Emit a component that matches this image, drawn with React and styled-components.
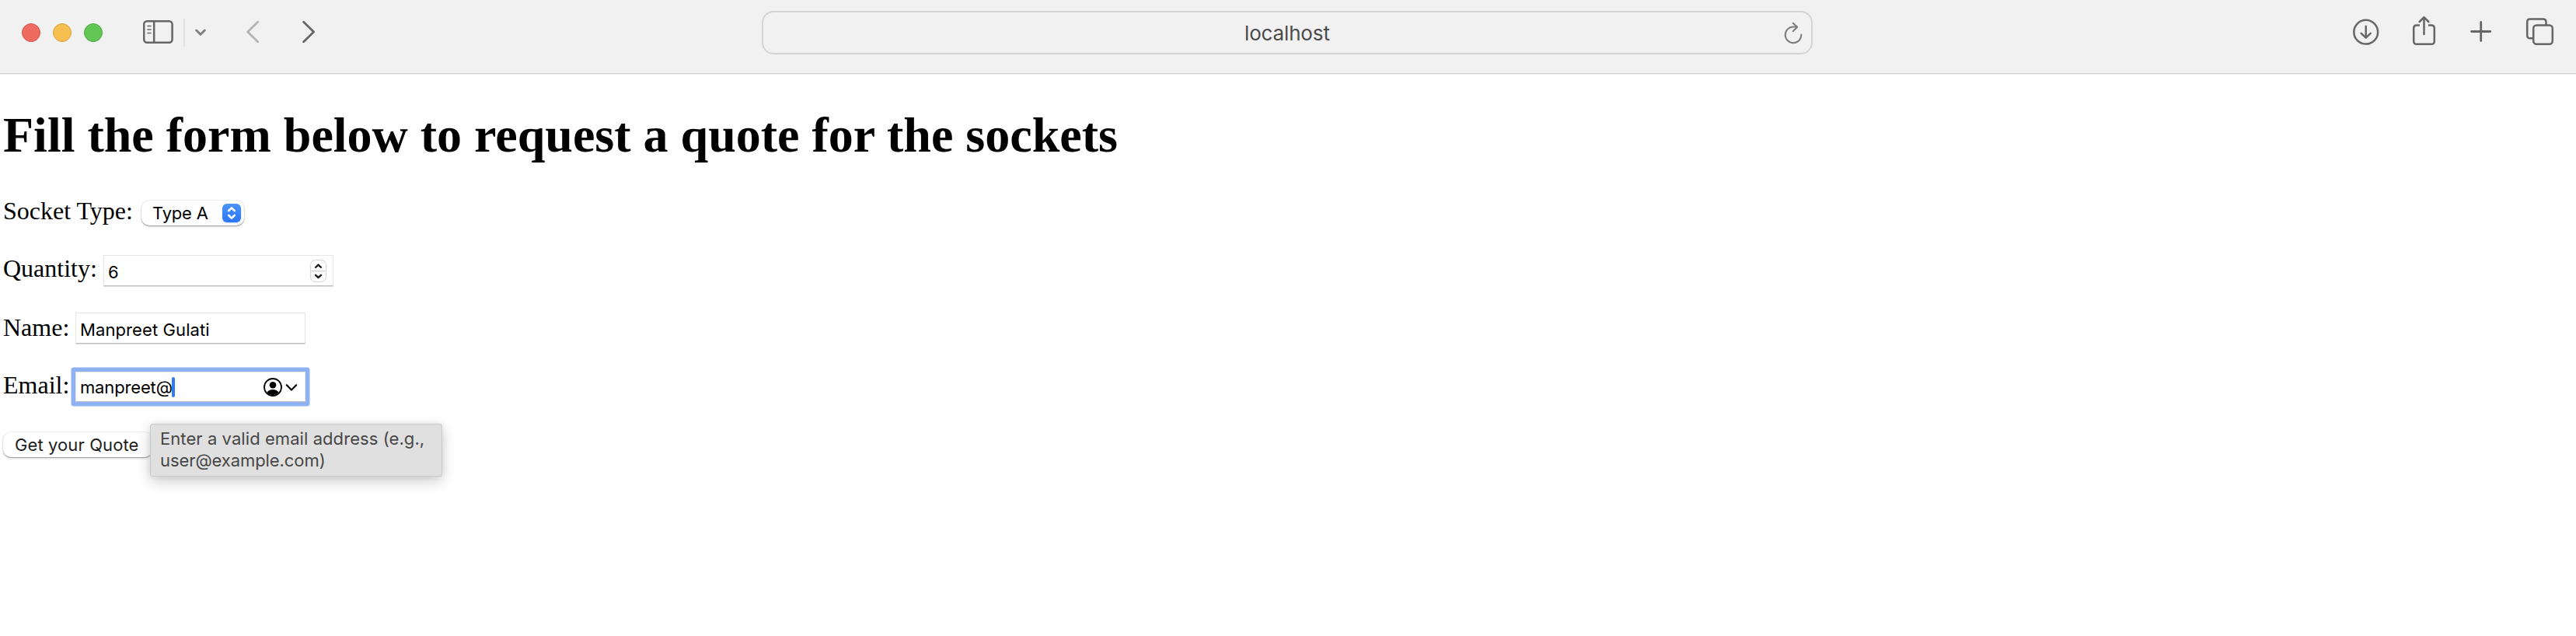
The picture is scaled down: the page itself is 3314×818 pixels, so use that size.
import React from "react";
import styled, { createGlobalStyle } from "styled-components";

const GlobalStyle = createGlobalStyle`
  *, *::before, *::after { box-sizing: border-box; }
  html, body { margin: 0; background: #fff; }
  body { overflow: hidden; }
`;

const ui = `Inter, "Liberation Sans", sans-serif`;

const Page = styled.div`
  width: 3314px;
  height: 818px;
  background: #fff;
  color: #000;
`;

const Toolbar = styled.header`
  display: grid;
  grid-template-columns: 980px 1352px 1fr;
  height: 96px;
  background: #f1f1f1;
  border-bottom: 1px solid #ececec;
  box-shadow: inset 0 -1px 0 #d5d5d5;
`;

const ToolGroup = styled.div`
  display: flex;
  align-items: flex-start;
  justify-content: ${(p) => (p.$end ? "flex-end" : "flex-start")};
  padding: ${(p) => (p.$end ? "18px 26px 0 0" : "18px 0 0 28px")};
`;

const Lights = styled.div`
  display: flex;
  gap: 16px;
  padding-top: 12px;
  margin-right: 48px;
`;

const Light = styled.span`
  width: 24px;
  height: 24px;
  border-radius: 50%;
  background: ${(p) => p.$fill};
  border: 1px solid ${(p) => p.$edge};
`;

const Divider = styled.span`
  width: 2px;
  height: 36px;
  margin: 6px 11px 0 12px;
  background: #e2e2e2;
`;

const Icon = styled.svg`
  display: block;
  flex: none;
  margin-left: ${(p) => p.$gap || 0}px;
  fill: none;
  stroke: ${(p) => p.$color || "#666"};
  stroke-width: ${(p) => p.$weight || 2.5};
  stroke-linecap: round;
  stroke-linejoin: round;
`;

const AddressBar = styled.div`
  display: flex;
  justify-content: space-between;
  height: 56px;
  margin-top: 14px;
  padding: 0 10px 0 619px;
  border: 2px solid #d4d4d4;
  border-radius: 15px;
`;

const Address = styled.span`
  font: 400 26px/53px ${ui};
  letter-spacing: -0.15px;
  color: #4b4b4b;
`;

const Content = styled.main`
  padding: 42px 0 0 4px;
`;

const Title = styled.h1`
  margin: 0 0 43px;
  font: 700 64px/72px "Liberation Serif", serif;
  white-space: nowrap;
`;

const Row = styled.div`
  display: flex;
  align-items: flex-start;
  height: ${(p) => p.$height}px;
`;

const Label = styled.label`
  flex: none;
  width: ${(p) => p.$width}px;
  font: 400 32px/36px "Liberation Serif", serif;
  white-space: nowrap;
`;

const Select = styled.div`
  display: flex;
  align-items: center;
  justify-content: space-between;
  width: 132px;
  height: 32px;
  margin-top: 5px;
  padding: 0 4px 0 14px;
  border-radius: 10px;
  background: #fff;
  box-shadow: 0 0 0 1px rgba(0, 0, 0, 0.06), 0 1px 1px rgba(0, 0, 0, 0.26), 0 2px 3px rgba(0, 0, 0, 0.12);
`;

const Arrows = styled.span`
  width: 24px;
  height: 24px;
  border-radius: 6px;
  background: linear-gradient(#4a94fb, #2d75f6);
  box-shadow: 0 1px 2px rgba(45, 117, 246, 0.3);
`;

const Field = styled.div`
  display: flex;
  align-items: center;
  justify-content: space-between;
  width: 296px;
  height: ${(p) => p.$height || 40}px;
  margin-top: ${(p) => p.$top}px;
  padding: 0 9px 0 5px;
  border: 1px solid #e6e6e6;
  border-bottom: 1px solid #bdbdbd;
  background: #fff;
  box-shadow: ${(p) =>
    p.$focused ? "0 0 0 5.5px #8fb2f5" : "0 1px 0 rgba(0, 0, 0, 0.12)"};
  border-radius: ${(p) => (p.$focused ? 1 : 0)}px;
`;

const Value = styled.span`
  display: flex;
  align-items: center;
  font: 400 22px/26px ${ui};
  letter-spacing: ${(p) => p.$track || 0}px;
  padding-top: ${(p) => p.$drop || 0}px;
  white-space: nowrap;
`;

const Caret = styled.span`
  width: 4px;
  height: 26px;
  margin-left: -1px;
  border-radius: 2px;
  background: #2f7bf6;
`;

const Stepper = styled.span`
  display: flex;
  flex-direction: column;
  width: 19px;
  height: 27px;
  border-radius: 6px;
  background: #fff;
  box-shadow: 0 0 0 1px rgba(0, 0, 0, 0.1), 0 0 2px rgba(0, 0, 0, 0.22);
`;

const FieldIcons = styled.span`
  display: flex;
  align-items: center;
  gap: 3px;
`;

const SubmitRow = styled.div`
  display: flex;
  align-items: flex-start;
  position: relative;
`;

const Submit = styled.button`
  width: 192px;
  height: 32px;
  margin: 3px 0 0;
  padding: 0 0 0 15px;
  border: 0;
  border-radius: 10px;
  background: #fff;
  color: #1e1e1e;
  font: 400 22px/32px ${ui};
  letter-spacing: 0.1px;
  text-align: left;
  white-space: nowrap;
  box-shadow: 0 0 0 1px rgba(0, 0, 0, 0.06), 0 1px 1px rgba(0, 0, 0, 0.26), 0 2px 3px rgba(0, 0, 0, 0.12);
`;

const Tooltip = styled.div`
  position: absolute;
  left: 189px;
  top: -6px;
  width: 376px;
  height: 68px;
  top: -8px;
  padding: 4px 0 0 12px;
  border: 1px solid #c9c9c9;
  border-radius: 3px;
  background: #e0e0e0;
  color: #474747;
  font: 400 22px/28px ${ui};
  white-space: nowrap;
  box-shadow: 0 6px 18px rgba(0, 0, 0, 0.2), 0 0 8px rgba(0, 0, 0, 0.06);
`;

const TooltipLine = styled.div`
  letter-spacing: ${(p) => p.$track}px;
`;

export default function App() {
  return (
    <Page>
      <GlobalStyle />
      <Toolbar>
        <ToolGroup>
          <Lights>
            <Light $fill="#ed6b5f" $edge="#d9554a" />
            <Light $fill="#f5bf4f" $edge="#d9a13c" />
            <Light $fill="#62c655" $edge="#4fa73f" />
          </Lights>
          <Icon $gap={4} width="40" height="46" viewBox="184 18 40 46">
            <rect x="185.2" y="27.2" width="36.4" height="27.6" rx="4" />
            <path d="M198.2 27.5V54.5" />
            <path d="M190 33.5h4M190 38h4M190 42.5h4" strokeWidth="1.6" />
          </Icon>
          <Divider />
          <Icon width="20" height="46" viewBox="249 18 20 46" $color="#808085" $weight={3}>
            <path d="M252.7 39L258 44.2L263.3 39" />
          </Icon>
          <Icon $gap={46} width="20" height="46" viewBox="315 18 20 46" $color="#b3b3b3" $weight={2.8}>
            <path d="M331.7 28.3L318.7 41L331.7 53.7" />
          </Icon>
          <Icon $gap={52} width="20" height="46" viewBox="387 18 20 46" $weight={2.8}>
            <path d="M390.6 28.3L403.6 41L390.6 53.7" />
          </Icon>
        </ToolGroup>
        <AddressBar>
          <Address>localhost</Address>
          <Icon width="28" height="52" viewBox="2292 16 28 52" $color="#7c7c7c" $weight={2}>
            <path d="M2311.5 34.6H2307A10.3 10.3 0 1 0 2317.3 44.5" />
            <path d="M2306.7 29.7L2312.2 34.8L2306.7 40.3" />
          </Icon>
        </AddressBar>
        <ToolGroup $end>
          <Icon width="36" height="46" viewBox="3026 18 36 46">
            <circle cx="3043.7" cy="41.2" r="15.4" />
            <path d="M3043.7 33.7V48.5M3037.7 42.8L3043.7 48.6L3049.7 42.8" />
          </Icon>
          <Icon $gap={40} width="34" height="46" viewBox="3102 18 34 46">
            <path d="M3113 32.4H3109Q3105.2 32.4 3105.2 36.2V53Q3105.2 56.8 3109 56.8H3128Q3131.8 56.8 3131.8 53V36.2Q3131.8 32.4 3128 32.4H3124" strokeLinecap="butt" />
            <path d="M3118.5 44V22.6M3112.7 28L3118.5 22.2L3124.3 28" />
          </Icon>
          <Icon $gap={40} width="32" height="46" viewBox="3176 18 32 46" $weight={2.8}>
            <path d="M3179.5 40.5H3203.8M3191.7 28.4V52.5" />
          </Icon>
          <Icon $gap={40} width="40" height="46" viewBox="3248 18 40 46">
            <path d="M3258.5 49.2H3255Q3251.2 49.2 3251.2 45.4V28.4Q3251.2 24.6 3255 24.6H3271.7Q3275.5 24.6 3275.5 28.4V32" strokeLinecap="butt" />
            <rect x="3259.2" y="32.4" width="24.6" height="24.4" rx="4" />
          </Icon>
        </ToolGroup>
      </Toolbar>
      <Content>
        <Title>Fill the form below to request a quote for the sockets</Title>
        <Row $height={74}>
          <Label $width={178}>Socket Type:</Label>
          <Select>
            <Value $track={-0.2}>Type A</Value>
            <Arrows>
              <Icon width="24" height="24" viewBox="0 0 24 24" $color="#fff" $weight={2.6}>
                <path d="M8.2 9L12 5.4L15.8 9M8.2 15L12 18.6L15.8 15" />
              </Icon>
            </Arrows>
          </Select>
        </Row>
        <Row $height={76}>
          <Label $width={129}>Quantity:</Label>
          <Field $top={1}>
            <Value $drop={3}>6</Value>
            <Stepper>
              <Icon width="19" height="27" viewBox="0 0 19 27" $color="#222" $weight={2.4}>
                <path d="M0.5 13.6H18.5" stroke="#d6d6d6" strokeWidth="1.6" strokeLinecap="butt" />
                <path d="M6 8.8L9.5 5.6L13 8.8M6 18.8L9.5 22L13 18.8" />
              </Icon>
            </Stepper>
          </Field>
        </Row>
        <Row $height={74}>
          <Label $width={93}>Name:</Label>
          <Field $top={-1}>
            <Value $drop={3} $track={0.1}>Manpreet Gulati</Value>
          </Field>
        </Row>
        <Row $height={76}>
          <Label $width={93}>Email:</Label>
          <Field $focused $height={39} $top={1}>
            <Value $track={-0.15}>manpreet@<Caret /></Value>
            <FieldIcons>
              <Icon width="26" height="26" viewBox="0 0 26 26" $color="#000" $weight={1.8}>
                <circle cx="13" cy="13" r="11" />
                <circle cx="13" cy="10.2" r="4.3" fill="#000" stroke="none" />
                <path d="M5.4 19.8Q7.6 16 13 16T20.6 19.8A10.5 10.5 0 0 1 5.4 19.8Z" fill="#000" stroke="none" />
              </Icon>
              <Icon width="16" height="26" viewBox="0 0 16 26" $color="#000" $weight={2.2}>
                <path d="M1.8 10.2L8 16.5L14.2 10.2" />
              </Icon>
            </FieldIcons>
          </Field>
        </Row>
        <SubmitRow>
          <Submit>Get your Quote</Submit>
          <Tooltip>
            <TooltipLine $track={0.07}>Enter a valid email address (e.g.,</TooltipLine>
            <TooltipLine $track={-0.08}>user@example.com)</TooltipLine>
          </Tooltip>
        </SubmitRow>
      </Content>
    </Page>
  );
}
